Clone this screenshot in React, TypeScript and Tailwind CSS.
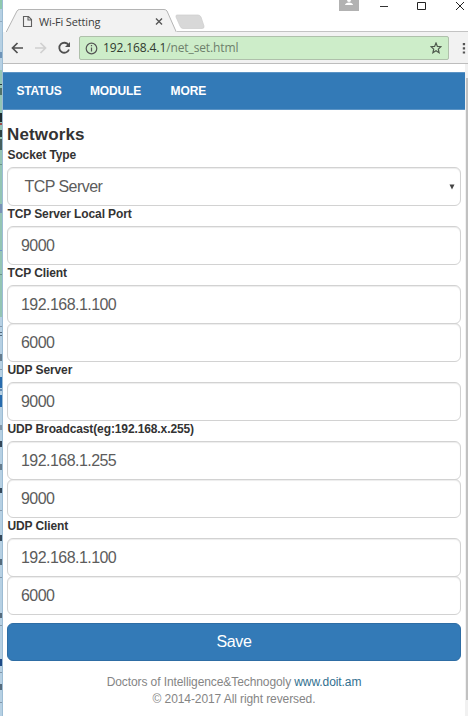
import type { ReactNode } from 'react';

const groups: { label: string; values: string[] }[] = [
  { label: 'TCP Server Local Port', values: ['9000'] },
  { label: 'TCP Client', values: ['192.168.1.100', '6000'] },
  { label: 'UDP Server', values: ['9000'] },
  { label: 'UDP Broadcast(eg:192.168.x.255)', values: ['192.168.1.255', '9000'] },
  { label: 'UDP Client', values: ['192.168.1.100', '6000'] },
];

// Slivers of the desktop window behind the browser: top offset, height, colour
const slivers = [
  { y: 0, h: 9, c: '#8fc9ae' },
  { y: 21, h: 1, c: '#8fa9bd' },
  { y: 52, h: 6, c: '#6f94b8' },
  { y: 84, h: 1, c: '#26373c' },
  { y: 88, h: 7, c: '#507269' },
  { y: 113, h: 9, c: '#1e2c30' },
  { y: 123, h: 2, c: '#a04a4a' },
  { y: 130, h: 7, c: '#2d4244' },
  { y: 139, h: 11, c: '#46605f' },
  { y: 164, h: 1, c: '#6a9488' },
  { y: 204, h: 9, c: '#7a93b4' },
  { y: 250, h: 1, c: '#6f94c8' },
  { y: 274, h: 1, c: '#6a9488' },
  { y: 326, h: 1, c: '#8397aa' },
  { y: 332, h: 1, c: '#53697c' },
  { y: 335, h: 1, c: '#53697c' },
  { y: 354, h: 7, c: '#667c8e' },
  { y: 369, h: 1, c: '#8397aa' },
  { y: 377, h: 11, c: '#286bad' },
  { y: 389, h: 2, c: '#6089b1' },
  { y: 395, h: 12, c: '#286bad' },
  { y: 425, h: 5, c: '#7f93a5' },
  { y: 441, h: 6, c: '#34485a' },
  { y: 464, h: 6, c: '#667c8e' },
  { y: 488, h: 5, c: '#34485a' },
  { y: 510, h: 1, c: '#8397aa' },
  { y: 535, h: 6, c: '#34485a' },
  { y: 559, h: 6, c: '#556b7d' },
  { y: 577, h: 1, c: '#8397aa' },
  { y: 613, h: 5, c: '#556b7d' },
  { y: 625, h: 1, c: '#8397aa' },
  { y: 659, h: 7, c: '#1f4b86' },
  { y: 672, h: 1, c: '#8397aa' },
  { y: 684, h: 6, c: '#556b7d' },
  { y: 702, h: 1, c: '#8397aa' },
];

function Box({ children, className = '' }: { children: ReactNode; className?: string }) {
  return (
    <div
      className={`flex h-[39px] items-center rounded-[6px] border border-[#d2d2d2] bg-white text-[16px] tracking-[-0.55px] text-[#5c5c5c] shadow-[inset_0_1px_1px_rgba(0,0,0,0.075)] ${className}`}
    >
      {children}
    </div>
  );
}

function Label({ children }: { children: ReactNode }) {
  return <div className="h-5 pl-[0.500px] text-[12px] leading-[17px] font-bold tracking-[-0.11px] whitespace-nowrap text-[#333]">{children}</div>;
}

function TabStrip() {
  return (
    <svg className="block h-8 w-[465px]" viewBox="1 0 465 32" fill="none">
      <path d="M0 32.5H4L15 11Q15.8 9.5 17.5 9.5H162Q164 9.5 165 11L174.500 32.500H466V33H0Z" fill="#f2f2f2" />
      <path d="M0 32.5H4L15 11Q15.8 9.5 17.5 9.5H162Q164 9.5 165 11L174.500 32.500" stroke="#b4b4b4" />
      <path d="M175 31.500H466" stroke="#c3c3c3" />
      <path d="M175 15H196Q198 15 199 17L202 26Q202.500 28.500 200 28.500H181Q179 28.500 178 26L174 17Q173.500 15 175 15Z" fill="#d8d8d8" stroke="#cdcdcd" strokeWidth=".7" />
      <path d="M21.500 16.500H26.500L29.500 19.500V26.500H21.500ZM26 16.500V20H29.500" stroke="#606060" strokeWidth="1.100" />
      <text x="37" y="25.500" fill="#3c3c3c" fontSize="11" fontFamily="'Open Sans', 'Noto Sans', sans-serif" textLength="61.500">Wi-Fi Setting</text>
      <path d="M154 18.500L160 24.500M160 18.500L154 24.500" stroke="#555" strokeWidth="1.400" />
      <path d="M337 0H357V11H337Z" fill="#b2b2b2" />
      <circle cx="347" cy="0" r="2" fill="#fff" />
      <path d="M343 5C343 1.500 351 1.500 351 5Z" fill="#fff" />
      <path d="M378 6.500H386" stroke="#333" />
      <path d="M415.500 2.500H423.500V9.500H415.500Z" stroke="#222" />
      <path d="M454 2L462 10M462 2L454 10" stroke="#222" />
    </svg>
  );
}

function Toolbar() {
  return (
    <div className="flex h-8 items-center border-b border-[#bdbdbd] bg-[#f2f2f2]">
      <svg className="h-[31px] w-[76px] shrink-0" viewBox="1 0 76 31" fill="none" strokeWidth="1.700">
        <path d="M21 16H10.500M15.500 11L10.500 16L15.500 21" stroke="#505050" />
        <path d="M33 16H43.500M38.500 11L43.500 16L38.500 21" stroke="#d0d0d0" />
        <path d="M66.500 13A5 5 0 1 0 67 17.500" stroke="#505050" strokeWidth="1.800" />
        <path d="M68 10V15H63Z" fill="#505050" />
      </svg>
      <div className="mt-px flex h-6 w-[370px] shrink-0 items-center rounded-[2px] border border-[#afc0ab] bg-[#cdedc9]">
        <svg className="ml-[5px] h-[13px] w-[13px] shrink-0" viewBox="0 0 13 13" fill="none" stroke="#555" strokeWidth="1.200">
          <circle cx="6.500" cy="6.500" r="5.300" />
          <path d="M6.500 5.500V9.500M6.500 3V4.300" />
        </svg>
        <svg className="h-[22px] w-[322px] shrink-0" viewBox="0 0 322 22">
          <text x="5" y="15" fontSize="12" fontFamily="'Open Sans', 'Noto Sans', sans-serif" textLength="135.500" fill="#303a30">
            192.168.4.1<tspan fill="#6e806c">/net_set.html</tspan>
          </text>
        </svg>
        <svg className="ml-[10px] h-3 w-3 shrink-0" viewBox="0 0 12 12" fill="none" stroke="#4d584c" strokeWidth="1.200">
          <path d="M6 1L7.400 4.400L11 4.700L8.300 7.100L9.100 10.700L6 8.800L2.900 10.700L3.700 7.100L1 4.700L4.600 4.400Z" />
        </svg>
      </div>
      <svg className="ml-3 h-[31px] w-[5px] shrink-0" viewBox="0 0 5 31" fill="#555">
        <path d="M1.800 11H4.100V13.200H1.800ZM1.800 15.200H4.100V17.400H1.800ZM1.800 19.400H4.100V21.600H1.800Z" />
      </svg>
    </div>
  );
}

export default function App() {
  return (
    <div className="flex h-[716px] w-[468px] overflow-hidden bg-white font-['Liberation_Sans',Arial,sans-serif]">
      <div className="w-[3px] shrink-0">
        <svg className="block h-[716px] w-[3px]" viewBox="0 0 3 716">
          <path d="M0 0H3V716H0Z" fill="#b6d0e3" />
          <path d="M0 70H3V317H0Z" fill="#94c5b4" />
          {slivers.map((s) => (
            <rect key={s.y} x="0" y={s.y} width="2" height={s.h} fill={s.c} />
          ))}
          <path d="M2 0H3V716H2Z" fill="#9cbcd4" />
        </svg>
      </div>
      <div className="flex w-[465px] shrink-0 flex-col">
        <TabStrip />
        <Toolbar />
        <div className="flex min-h-0 flex-1">
          <div className="flex w-[462px] shrink-0 flex-col">
            <nav className="mt-2 flex h-[38px] items-center border-y border-[#5c94c5] bg-[#337ab7] text-[12px] font-bold text-white">
              <span className="ml-[13.500px] w-[73.500px] tracking-[-0.2px]">STATUS</span>
              <span className="w-[80.500px] tracking-[-0.15px]">MODULE</span>
              <span className="tracking-[-0.1px]">MORE</span>
            </nav>
            <main className="flex flex-col pr-1 pl-1">
              <h1 className="mt-3 h-[25px] text-[17px] leading-[25px] font-bold tracking-[0.15px] text-[#333]">Networks</h1>
              <Label>Socket Type</Label>
              <Box className="justify-between pr-[5px] pl-[16.500px]">
                <span>TCP Server</span>
                <svg className="h-[6px] w-[6px]" viewBox="0 0 6 6">
                  <path d="M.500 .500H5.500L3 5.500Z" fill="#444" />
                </svg>
              </Box>
              {groups.map((g) => (
                <section key={g.label} className="flex flex-col">
                  <Label>{g.label}</Label>
                  {g.values.map((v, i) => (
                    <Box key={v} className={i > 0 ? '-mt-px pl-[13px]' : 'pl-[13px]'}>
                      {v}
                    </Box>
                  ))}
                </section>
              ))}
              <button className="mt-2 h-[38px] rounded-[6px] border border-[#2e6da4] bg-[#337ab7] text-[16px] tracking-[-0.4px] text-white">Save</button>
            </main>
            <footer className="mt-[13px] text-center text-[12px] leading-[17px] tracking-[-0.09px] text-[#858585]">
              <p>
                Doctors of Intelligence&amp;Technogoly <span className="text-[#31708f]">www.doit.am</span>
              </p>
              <p>© 2014-2017 All right reversed.</p>
            </footer>
          </div>
          <div className="w-[3px] bg-[#f1f1f1] pt-[14px] pl-px">
            <div className="h-[622px] bg-[#c1c1c1]" />
          </div>
        </div>
      </div>
    </div>
  );
}
